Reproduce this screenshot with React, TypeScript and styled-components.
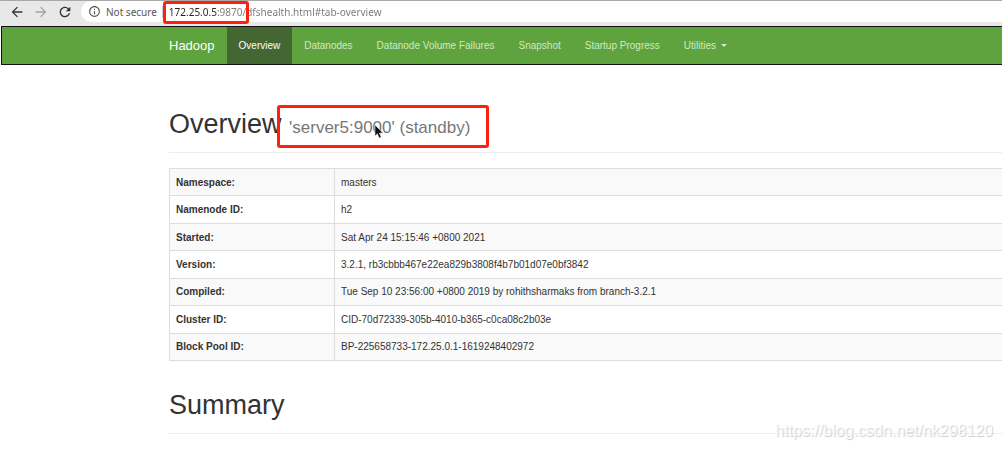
import React from 'react';
import styled, { createGlobalStyle } from 'styled-components';

const GlobalStyle = createGlobalStyle`
  * { box-sizing: border-box; }
  body {
    margin: 0;
    background: #fff;
    color: #333;
    font-family: "Liberation Sans", Arial, sans-serif;
    font-size: 10px;
    line-height: 15px;
    overflow-x: hidden;
  }
`;

const Toolbar = styled.header`
  display: flex;
  align-items: stretch;
  gap: 8px;
  height: 26px;
  padding: 0 0 4px 9px;
  border-top: 1px solid #a9a9a6;
  background: #e8e8e8;
  font-family: "Noto Sans", "Open Sans", sans-serif;
  font-size: 10px;
`;

const ToolButton = styled.button<{ $dim?: boolean }>`
  display: flex;
  align-items: center;
  width: 16px;
  padding: 0;
  border: 0;
  background: none;
  color: ${(p) => (p.$dim ? '#a3a3a3' : '#333')};
`;

const AddressBar = styled.div`
  display: flex;
  flex: 1;
  align-items: center;
  padding-left: 7px;
  border-radius: 11px 0 0 11px;
  background: #fff;
  color: #555;
`;

const Security = styled.label`
  margin-left: 5px;
  padding-right: 5px;
  border-right: 1px solid #ccc;
  line-height: 12px;
  white-space: nowrap;
`;

const UrlWrap = styled.div`
  position: relative;
  flex: 1;
  margin-left: 6px;
`;

const UrlInput = styled.input`
  display: block;
  width: 100%;
  height: 20px;
  padding: 0;
  border: 0;
  outline: 0;
  background: linear-gradient(90deg, #222 48px, #777 48px);
  background-clip: text;
  -webkit-background-clip: text;
  color: transparent;
  font: inherit;
`;

const UrlMark = styled.span`
  position: absolute;
  top: -1px;
  left: -6px;
  width: 86px;
  height: 23px;
  border: 3px solid #fd2011;
  border-radius: 3px;
  pointer-events: none;
`;

const Navbar = styled.nav`
  display: flex;
  height: 39px;
  margin-left: 1px;
  padding-left: 155px;
  border: 1px solid #111;
  border-right: 0;
  background: #5fa33e;
  white-space: nowrap;
`;

const Brand = styled.a`
  display: flex;
  align-items: center;
  padding: 0 12px;
  color: #fff;
  font-size: 13px;
  text-decoration: none;
`;

const NavLink = styled.a<{ $active?: boolean }>`
  display: flex;
  align-items: center;
  gap: 5px;
  padding: 0 12px;
  background: ${(p) => (p.$active ? '#446633' : 'transparent')};
  color: ${(p) => (p.$active ? '#fff' : '#d2e8c6')};
  text-decoration: none;
`;

const Caret = styled.span`
  border: 3px solid transparent;
  border-top-color: currentColor;
  border-bottom: 0;
`;

const Content = styled.main`
  padding-left: 169px;
`;

const PageHeader = styled.div`
  padding-bottom: 13px;
  border-bottom: 1px solid #eee;
`;

const Heading = styled.h1`
  margin: 0;
  color: #333;
  font-size: 27px;
  font-weight: 400;
  line-height: 30px;
`;

const Overview = styled.section`
  padding-top: 44px;
`;

const Summary = styled.section`
  padding-top: 29px;
`;

const State = styled.small`
  position: relative;
  color: #777;
  font-size: 17px;
  line-height: 1;
`;

const StateMark = styled.span`
  position: absolute;
  top: -13px;
  left: -12px;
  width: 212px;
  height: 43px;
  border: 3px solid #fd2011;
  border-radius: 3px;
`;

const Pointer = styled.svg`
  position: absolute;
  top: 6px;
  left: 85px;
`;

const InfoTable = styled.table`
  width: 100%;
  height: 193px;
  margin-top: 15px;
  border-collapse: collapse;
`;

const Row = styled.tr`
  &:nth-child(odd) { background: #f9f9f9; }
`;

const Label = styled.th`
  width: 165px;
  padding: 0 6px;
  border: 1px solid #ddd;
  text-align: left;
`;

const Value = styled.td`
  padding: 0 6px;
  border: 1px solid #ddd;
  border-right: 0;
`;

const Watermark = styled.div`
  position: absolute;
  right: 9px;
  top: 421px;
  color: rgba(255, 255, 255, 0.8);
  font-size: 16px;
  line-height: 20px;
  text-shadow: 1px 1px 1px #ccc;
`;

const rows = [
  ['Namespace:', 'masters'],
  ['Namenode ID:', 'h2'],
  ['Started:', 'Sat Apr 24 15:15:46 +0800 2021'],
  ['Version:', '3.2.1, rb3cbbb467e22ea829b3808f4b7b01d07e0bf3842'],
  ['Compiled:', 'Tue Sep 10 23:56:00 +0800 2019 by rohithsharmaks from branch-3.2.1'],
  ['Cluster ID:', 'CID-70d72339-305b-4010-b365-c0ca08c2b03e'],
  ['Block Pool ID:', 'BP-225658733-172.25.0.1-1619248402972'],
];

const links = ['Overview', 'Datanodes', 'Datanode Volume Failures', 'Snapshot', 'Startup Progress'];

const Icon = ({ d, size = 16 }: { d: string; size?: number }) => (
  <svg width={size} height={size} viewBox="0 0 24 24" fill="currentColor" aria-hidden="true">
    <path d={d} />
  </svg>
);

export default function App() {
  return (
    <>
      <GlobalStyle />
      <Toolbar>
        <ToolButton aria-label="Back">
          <Icon d="M20 11H7.83l5.59-5.59L12 4l-8 8 8 8 1.41-1.41L7.83 13H20v-2z" />
        </ToolButton>
        <ToolButton $dim aria-label="Forward">
          <Icon d="M12 4l-1.41 1.41L16.17 11H4v2h12.17l-5.58 5.59L12 20l8-8z" />
        </ToolButton>
        <ToolButton aria-label="Reload">
          <Icon d="M17.65 6.35A7.958 7.958 0 0 0 12 4c-4.42 0-7.99 3.58-7.99 8s3.57 8 7.99 8c3.73 0 6.84-2.55 7.73-6h-2.08A5.99 5.99 0 0 1 12 18c-3.31 0-6-2.69-6-6s2.69-6 6-6c1.66 0 3.14.69 4.22 1.78L13 11h7V4l-2.35 2.35z" />
        </ToolButton>
        <AddressBar>
          <Icon
            size={13}
            d="M11 7h2v2h-2zm0 4h2v6h-2zm1-9C6.48 2 2 6.48 2 12s4.48 10 10 10 10-4.48 10-10S17.52 2 12 2zm0 18c-4.41 0-8-3.59-8-8s3.59-8 8-8 8 3.59 8 8-3.59 8-8 8z"
          />
          <Security htmlFor="url">Not secure</Security>
          <UrlWrap>
            <UrlInput id="url" readOnly value="172.25.0.5:9870/dfshealth.html#tab-overview" />
            <UrlMark />
          </UrlWrap>
        </AddressBar>
      </Toolbar>
      <Navbar>
        <Brand href="#">Hadoop</Brand>
        {links.map((l, i) => (
          <NavLink key={l} href="#" $active={i === 0}>{l}</NavLink>
        ))}
        <NavLink href="#">Utilities<Caret /></NavLink>
      </Navbar>
      <Content>
        <Overview>
          <PageHeader>
            <Heading>
              Overview{' '}
              <State>
                'server5:9000' (standby)
                <StateMark />
                <Pointer width="10" height="15" viewBox="0 0 10 15" aria-hidden="true">
                  <path d="M1 1v11l2.4-2.2L5.2 14l2-.9-1.8-4H9z" fill="#111" stroke="#ddd" strokeWidth=".6" />
                </Pointer>
              </State>
            </Heading>
          </PageHeader>
          <InfoTable>
            <tbody>
              {rows.map(([k, v]) => (
                <Row key={k}>
                  <Label scope="row">{k}</Label>
                  <Value>{v}</Value>
                </Row>
              ))}
            </tbody>
          </InfoTable>
        </Overview>
        <Summary>
          <PageHeader>
            <Heading as="h2">Summary</Heading>
          </PageHeader>
        </Summary>
      </Content>
      <Watermark>https://blog.csdn.net/nk298120</Watermark>
    </>
  );
}
